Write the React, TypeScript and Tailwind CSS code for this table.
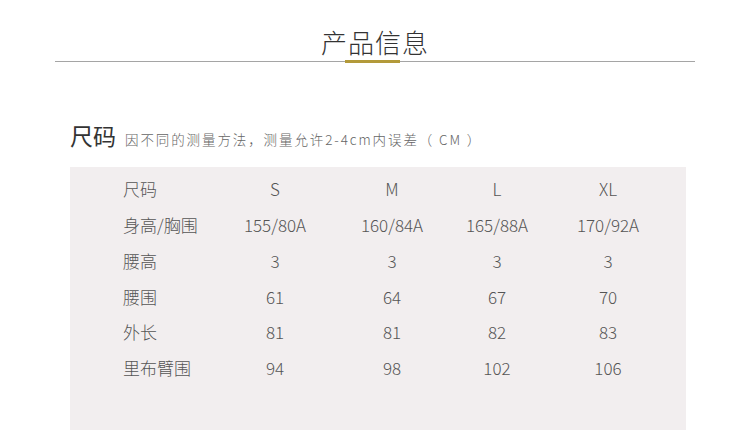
const rows = [
  ["尺码", "S", "M", "L", "XL"],
  ["身高/胸围", "155/80A", "160/84A", "165/88A", "170/92A"],
  ["腰高", "3", "3", "3", "3"],
  ["腰围", "61", "64", "67", "70"],
  ["外长", "81", "81", "82", "83"],
  ["里布臂围", "94", "98", "102", "106"],
];

const font = "font-['Noto_Sans_CJK_SC','Noto_Sans',sans-serif]";

export default function App() {
  return (
    <div className={`w-[750px] h-[443px] bg-white ${font}`}>
      <div className="pt-[26px] text-center">
        <h1 className="text-[26px] leading-[32px] font-light text-[#333] tracking-[1px]">产品信息</h1>
      </div>
      <div className="relative mx-[55px] mt-[3px] h-px bg-[#a5a5a5]">
        <div className="absolute left-[290px] top-[-1px] w-[55px] h-[3px] bg-[#b39a3a]" />
      </div>

      <div className="flex items-baseline pl-[70px] mt-[58px]">
        <span className="text-[23px] leading-[30px] text-[#333]">尺码</span>
        <span className="ml-[9px] text-[13.5px] text-[#666] font-light tracking-[1.9px]">
          因不同的测量方法，测量允许2-4cm内误差（ CM ）
        </span>
      </div>

      <div className="ml-[70px] mt-[17px] w-[616px] h-[263px] bg-[#f2eeef] pl-[53px] pt-[4px]">
        {rows.map((r, i) => (
          <div
            key={i}
            className="grid grid-cols-[97px_110px_124px_86px_136px] h-[35.8px] items-center text-[17px] font-light text-[#555]"
          >
            <span>{r[0]}</span>
            {r.slice(1).map((c, j) => (
              <span key={j} className="text-center">{c}</span>
            ))}
          </div>
        ))}
      </div>
    </div>
  );
}
